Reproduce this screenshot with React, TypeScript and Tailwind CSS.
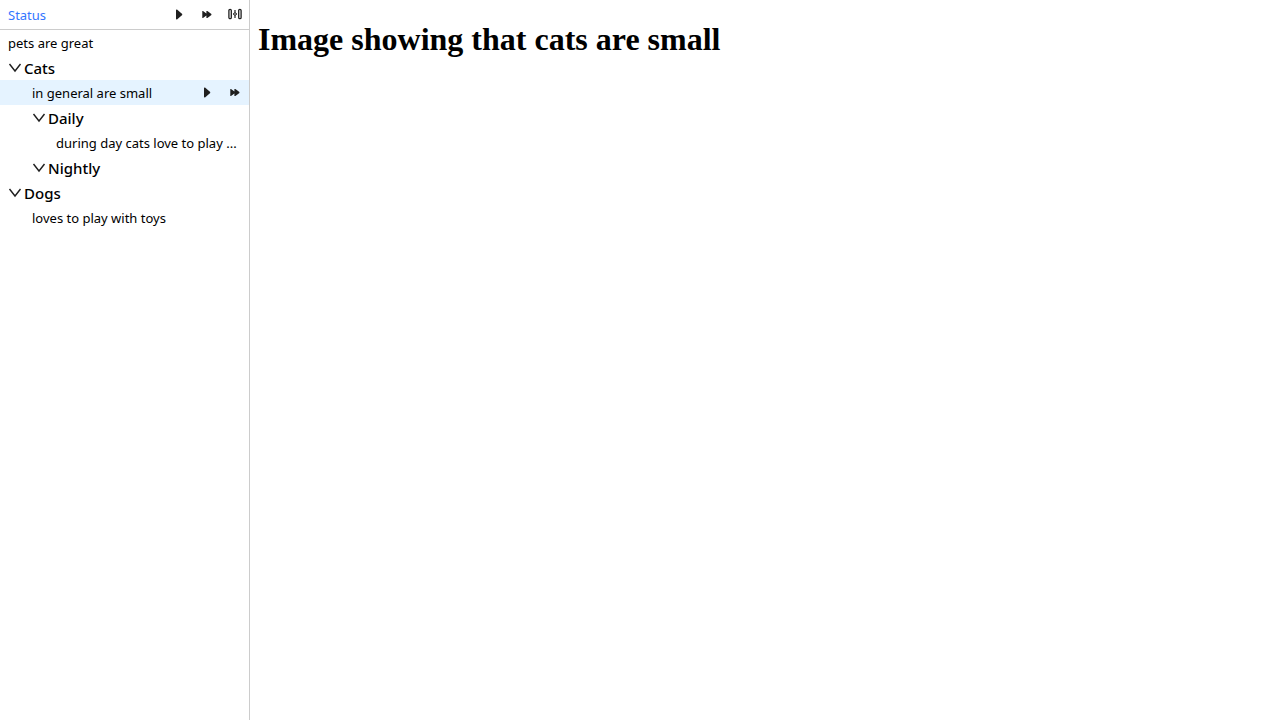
import React from "react";

type IconProps = { className?: string };

function PlayIcon({ className = "" }: IconProps) {
  return (
    <svg className={className} width="16" height="16" viewBox="0 0 16 16" fill="#1f1f1f" aria-hidden="true">
      <path d="M5 2.8 L6 2.5 L11.2 7.1 V7.9 L6 12.5 L5 12.2 Z" />
    </svg>
  );
}

function PlayAllIcon({ className = "" }: IconProps) {
  return (
    <svg className={className} width="16" height="16" viewBox="0 0 16 16" fill="#1f1f1f" aria-hidden="true">
      <path d="M3.3 4 L4 4 L7.4 6.4 V4 H8.4 L12.4 7.1 V7.9 L8.4 11 H7.4 V8.6 L4 11 H3.3 Z" />
    </svg>
  );
}

function CompareIcon({ className = "" }: IconProps) {
  return (
    <svg className={className} width="16" height="16" viewBox="0 0 16 16" fill="none" stroke="#1f1f1f" aria-hidden="true">
      <rect x="1.9" y="2.3" width="2.4" height="9.4" rx="1.2" strokeWidth="1.3" />
      <rect x="11.7" y="2.3" width="2.4" height="9.4" rx="1.2" strokeWidth="1.3" />
      <path d="M8 3 V11" strokeWidth="1.2" />
      <path d="M8 5 L10 7 L8 9 L6 7 Z" fill="#777" stroke="#555" strokeWidth="1" />
    </svg>
  );
}

function Chevron() {
  return (
    <svg width="16" height="16" viewBox="0 0 16 16" fill="none" stroke="#1f1f1f" strokeWidth="1.4" aria-hidden="true">
      <path d="M1.5 4 L7 11 L12.5 4" />
    </svg>
  );
}

function IconButton({ label, children }: { label: string; children: React.ReactNode }) {
  return (
    <button type="button" aria-label={label} className="flex w-7 items-center justify-center">
      {children}
    </button>
  );
}

function Suite({ name, indent }: { name: string; indent: string }) {
  return (
    <button type="button" aria-expanded="true" className={`flex h-[25px] w-full items-center pt-px text-left text-[15px] font-medium ${indent}`}>
      <Chevron />
      {name}
    </button>
  );
}

function Story({ name, indent, selected = false }: { name: string; indent: string; selected?: boolean }) {
  return (
    <div className={`flex h-[25px] items-center ${indent} ${selected ? "bg-[#e5f3ff]" : "pr-2"}`}>
      <a href="#story" className="min-w-0 flex-1 truncate pt-0.5">
        {name}
      </a>
      {selected && (
        <div className="flex">
          <IconButton label="Run"><PlayIcon /></IconButton>
          <IconButton label="Run all"><PlayAllIcon /></IconButton>
        </div>
      )}
    </div>
  );
}

export default function App() {
  return (
    <div className="flex min-h-screen bg-white text-black">
      <aside className="w-[250px] shrink-0 border-r border-[#cccccc] font-['Noto_Sans','Open_Sans',sans-serif] text-[13px]">
        <header className="flex h-[30px] items-center border-b border-[#cccccc] pl-2">
          <a href="#status" className="flex-1 pt-0.5 text-[#3376ff]">Status</a>
          <IconButton label="Run"><PlayIcon /></IconButton>
          <IconButton label="Run all"><PlayAllIcon /></IconButton>
          <IconButton label="Compare"><CompareIcon /></IconButton>
        </header>
        <nav aria-label="Tests">
          <Story name="pets are great" indent="pl-2" />
          <Suite name="Cats" indent="pl-2" />
          <Story name="in general are small" indent="pl-8" selected />
          <Suite name="Daily" indent="pl-8" />
          <Story name="during day cats love to play ..." indent="pl-14" />
          <Suite name="Nightly" indent="pl-8" />
          <Suite name="Dogs" indent="pl-2" />
          <Story name="loves to play with toys" indent="pl-8" />
        </nav>
      </aside>
      <main className="min-w-0 flex-1 px-2 pt-[21px]">
        <h1 className="font-['Liberation_Serif',serif] text-[32px] leading-[37px] font-bold">
          Image showing that cats are small
        </h1>
      </main>
    </div>
  );
}
